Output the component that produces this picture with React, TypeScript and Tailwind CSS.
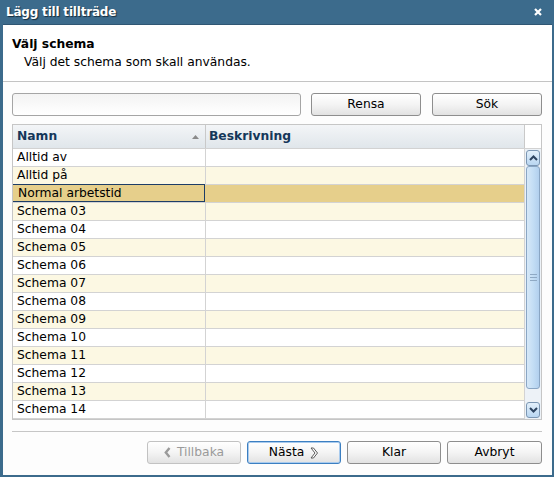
import React from 'react';

const rows = [
  'Alltid av',
  'Alltid på',
  'Normal arbetstid',
  'Schema 03',
  'Schema 04',
  'Schema 05',
  'Schema 06',
  'Schema 07',
  'Schema 08',
  'Schema 09',
  'Schema 10',
  'Schema 11',
  'Schema 12',
  'Schema 13',
  'Schema 14',
];

const SELECTED = 2;

function Button({ children, className = '' }: { children: React.ReactNode; className?: string }) {
  return (
    <button
      className={
        'h-[23px] rounded-[3px] border bg-gradient-to-b from-white via-[#f4f4f4] to-[#e2e2e2] text-[12.3px] flex items-center justify-center gap-[6px] ' +
        className
      }
    >
      {children}
    </button>
  );
}

function ScrollArrow({ up }: { up?: boolean }) {
  return (
    <div className="h-[16px] mx-[1px] rounded-[3px] border border-[#7b96b3] bg-gradient-to-b from-[#e3f0fb] to-[#b9d6f1] flex items-center justify-center">
      <svg width="9" height="6" viewBox="0 0 9 6">
        <path
          d={up ? 'M1 5 L4.5 1.5 L8 5' : 'M1 1 L4.5 4.5 L8 1'}
          fill="none"
          stroke="#2d4460"
          strokeWidth="2"
        />
      </svg>
    </div>
  );
}

export default function App() {
  return (
    <div className="w-[554px] h-[477px] bg-[#3c6b8c] flex flex-col pl-[3px] pr-[2px] pb-[2px] font-['DejaVu_Sans',sans-serif] text-black">
      {/* title bar */}
      <div className="h-[25px] shrink-0 flex items-center justify-between pl-[3px] pr-[10px] border-b border-[#2f5673]">
        <span className="text-white font-bold text-[12px] [text-shadow:1px_1px_1px_#152c3c] tracking-[-0.2px]">
          Lägg till tillträde
        </span>
        <svg width="8" height="8" viewBox="0 0 8 8">
          <path d="M1 1 L7 7 M7 1 L1 7" stroke="#ffffff" strokeWidth="2.2" />
        </svg>
      </div>

      {/* body */}
      <div className="flex-1 bg-white flex flex-col">
        <div className="h-[57px] shrink-0 border-b border-[#c3c3c3] pl-[9px] pt-[12px]">
          <div className="font-bold text-[12.3px] leading-[15px]">Välj schema</div>
          <div className="text-[12.3px] leading-[15px] pl-[12px] mt-[3px]">Välj det schema som skall användas.</div>
        </div>

        <div className="flex-1 bg-[#fdfdfd] pl-[9px] pr-[10px] pt-[11px] flex flex-col">
          {/* search row */}
          <div className="flex items-center h-[23px] shrink-0">
            <div className="w-[289px] h-[23px] rounded-[3px] border border-[#a5a5a5] bg-gradient-to-b from-[#f3f3f3] to-white" />
            <Button className="ml-[10px] w-[110px] border-[#8e8e8e]">Rensa</Button>
            <Button className="ml-[11px] w-[110px] border-[#8e8e8e]">Sök</Button>
          </div>

          {/* grid */}
          <div className="mt-[8px] h-[296px] shrink-0 border border-[#c6c6c6] bg-white flex flex-col overflow-hidden">
            <div className="h-[24px] flex shrink-0 border-b border-[#d2d2d2]">
              <div className="w-[193px] border-r border-[#c9c9c9] bg-gradient-to-b from-[#f3f5f7] to-[#e0e6eb] flex items-center justify-between pl-[4px] pr-[6px]">
                <span className="font-bold text-[12.3px] text-[#15375a]">Namn</span>
                <svg width="7" height="4" viewBox="0 0 7 4">
                  <path d="M0 4 L3.5 0 L7 4 Z" fill="#8a8a8a" />
                </svg>
              </div>
              <div className="flex-1 border-r border-[#c9c9c9] bg-gradient-to-b from-[#f3f5f7] to-[#e0e6eb] flex items-center pl-[3px]">
                <span className="font-bold text-[12.3px] text-[#15375a]">Beskrivning</span>
              </div>
              <div className="w-[16px] bg-white" />
            </div>

            <div className="flex flex-1 min-h-0">
              <div className="flex-1 flex flex-col">
                {rows.map((name, i) => {
                  const selected = i === SELECTED;
                  const bg = selected ? 'bg-[#e6cf8b]' : i % 2 === 1 ? 'bg-[#fcf8e3]' : 'bg-white';
                  return (
                    <div key={name} className={'h-[18px] shrink-0 flex border-b border-[#d3d3d3] ' + bg}>
                      <div
                        className={
                          'w-[193px] border-r text-[12.3px] leading-[17px] pl-[4px] ' +
                          (selected ? 'border border-[#1d3d66] -mt-[1px] h-[18px] -ml-[1px] pl-[5px] leading-[17px]' : 'border-[#d3d3d3]')
                        }
                      >
                        {name}
                      </div>
                      <div className="flex-1" />
                    </div>
                  );
                })}
                <div className="h-[1px] border-b border-[#d3d3d3]" />
              </div>

              {/* scrollbar */}
              <div className="w-[17px] border-l border-[#d3d3d3] bg-[#edf2f7] flex flex-col pt-[1px]">
                <ScrollArrow up />
                <div className="h-[223px] mx-[1px] rounded-[3px] border border-[#8aa6c4] bg-gradient-to-r from-[#d6e8f8] via-[#c4def5] to-[#b2d0ee] flex flex-col items-center justify-center gap-[2px]">
                  <div className="w-[7px] h-[1px] bg-[#8fa9c4]" />
                  <div className="w-[7px] h-[1px] bg-[#8fa9c4]" />
                  <div className="w-[7px] h-[1px] bg-[#8fa9c4]" />
                </div>
                <div className="flex-1" />
                <ScrollArrow />
                <div className="h-[1px]" />
              </div>
            </div>
          </div>

          <div className="mt-[11px] border-t border-[#c6c6c6]" />

          {/* footer buttons */}
          <div className="mt-[9px] flex justify-end gap-[6px]">
            <Button className="w-[94px] border-[#c2c2c2] text-[#9a9a9a]">
              <svg width="7" height="11" viewBox="0 0 7 11">
                <path d="M5.5 1 L1.8 5.5 L5.5 10" fill="none" stroke="#9a9a9a" strokeWidth="2.4" />
              </svg>
              Tillbaka
            </Button>
            <Button className="w-[94px] border-[#3c7fc1] shadow-[inset_0_0_0_1px_#a9cbee]">
              Nästa
              <svg width="9" height="12" viewBox="0 0 9 12">
                <path d="M1 1 L5 6 L1 11 L3.5 11 L7.5 6 L3.5 1 Z" fill="#ffffff" stroke="#5a5a5a" strokeWidth="1" />
              </svg>
            </Button>
            <Button className="w-[94px] border-[#8e8e8e]">Klar</Button>
            <Button className="w-[95px] border-[#8e8e8e]">Avbryt</Button>
          </div>
        </div>
      </div>
    </div>
  );
}
